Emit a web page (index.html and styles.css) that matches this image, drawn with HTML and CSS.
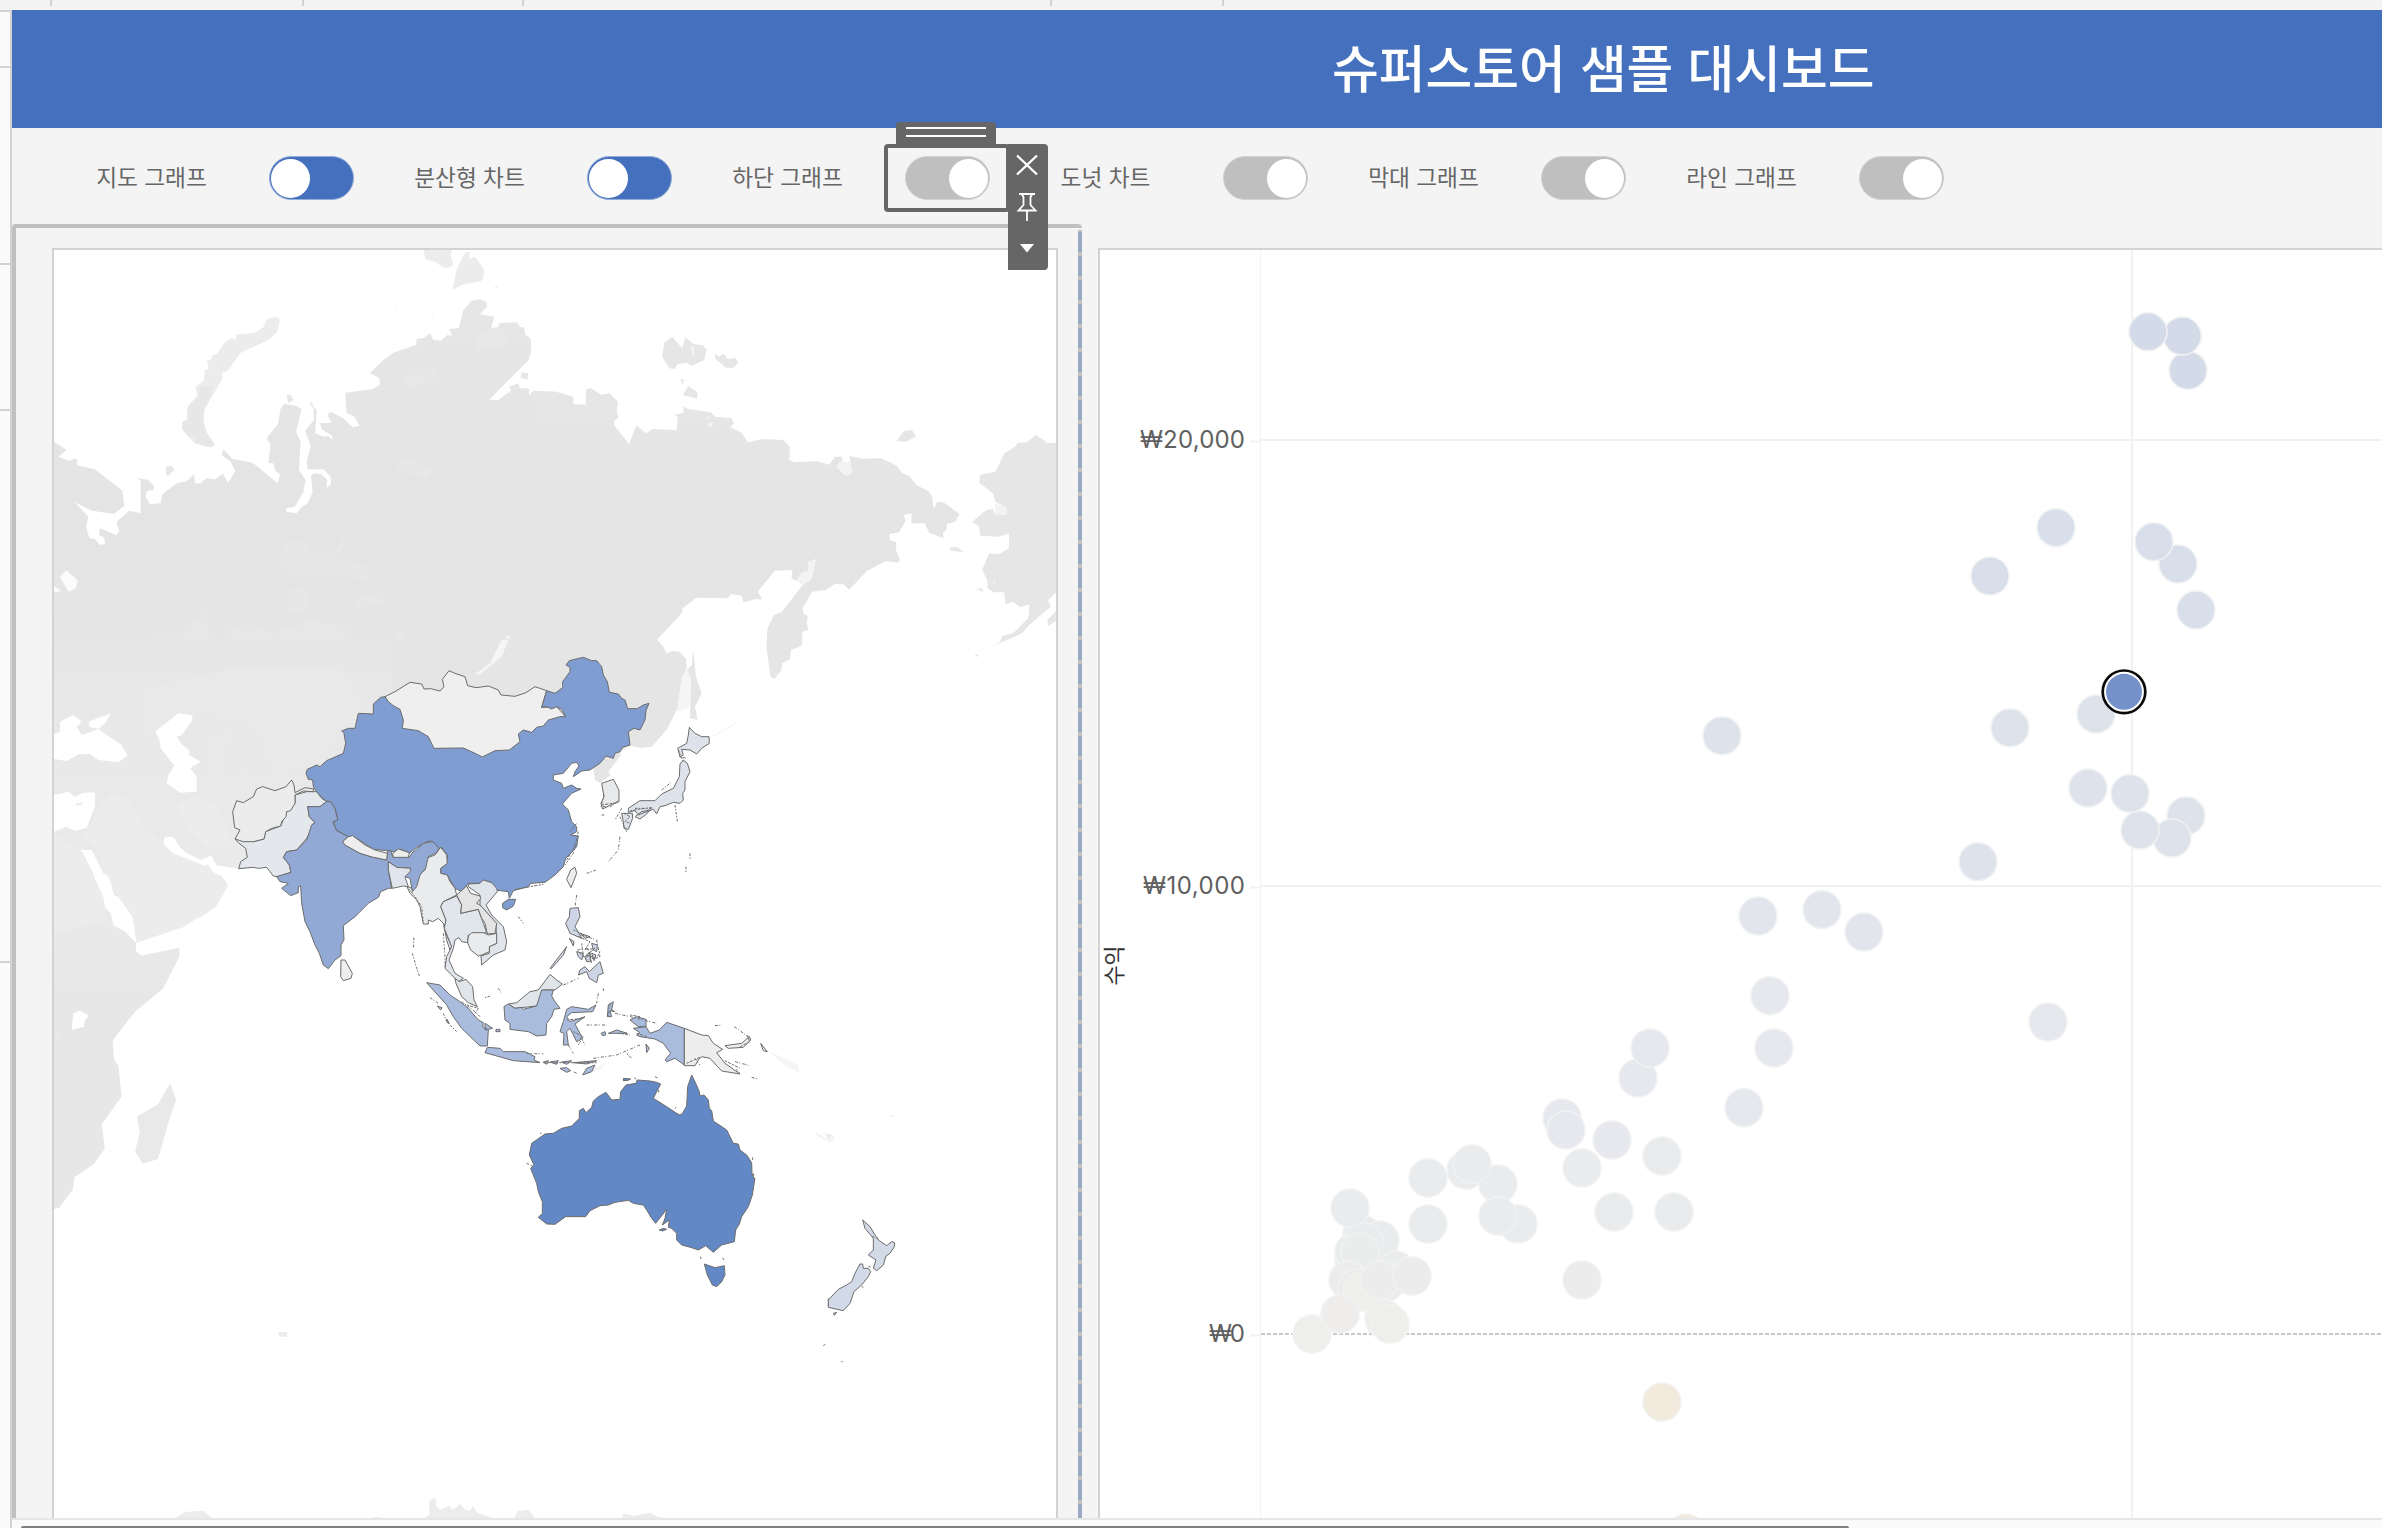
FILE: index.html
```html
<!DOCTYPE html>
<html lang="ko">
<head>
<meta charset="utf-8">
<title>슈퍼스토어 샘플 대시보드</title>
<link rel="stylesheet" href="styles.css">
</head>
<body>
<svg class="ruler-top" viewBox="0 0 2382 10"><path d="M51 0V6M303 0V6M523 0V6M1051 0V6M1223 0V6"/></svg>
<div class="workspace">
  <svg class="ruler-left" viewBox="0 10 12 1518"><path d="M0 11H11M0 67H11M0 264H11M0 410H11M0 962H11M11 10V1528"/></svg>
  <main class="dashboard">
    <header class="title-bar"><h1>슈퍼스토어 샘플 대시보드</h1></header>
    <section class="controls">
      <div class="control"><span class="label">지도 그래프</span><span class="toggle on"><i></i></span></div>
      <div class="control"><span class="label">분산형 차트</span><span class="toggle on"><i></i></span></div>
      <div class="control"><span class="label">하단 그래프</span><span class="toggle"><i></i>
        <span class="selection">
          <span class="grip"></span>
          <svg class="tools" viewBox="1008 144 40 126">
            <path d="M1008 144H1044a4 4 0 0 1 4 4V266a4 4 0 0 1-4 4H1008Z" fill="#666"/>
            <path d="M1017 155.500L1037 174.500M1037 155.500L1017 174.500" stroke="#fff" stroke-width="2.400" fill="none"/>
            <path d="M1019 194H1035M1022 194.500L1023.500 197V205L1018.500 210.500H1035.500L1030.500 205V197L1032 194.500M1027 210V221" stroke="#fff" stroke-width="1.800" fill="none"/>
            <path d="M1020 244H1034L1027 252.500Z" fill="#fff"/>
          </svg>
        </span></span></div>
      <div class="control"><span class="label">도넛 차트</span><span class="toggle"><i></i></span></div>
      <div class="control"><span class="label">막대 그래프</span><span class="toggle"><i></i></span></div>
      <div class="control"><span class="label">라인 그래프</span><span class="toggle"><i></i></span></div>
    </section>
    <section class="sheets">
      <div class="container">
        <div class="sheet map">
<svg viewBox="54 250 1002 1268">
<defs>
<linearGradient id="south" x1="0" y1="0" x2="0" y2="1"><stop offset="0" stop-color="#e6e6e6"/><stop offset=".15" stop-color="#e8e8e8"/><stop offset=".6" stop-color="#eaeaea"/><stop offset="1" stop-color="#e6e6e6"/></linearGradient>
<linearGradient id="north" x1="0" y1="0" x2="0" y2="1"><stop offset="0" stop-color="#e6e6e6"/><stop offset=".6" stop-color="#e4e4e4"/><stop offset="1" stop-color="#e6e6e6"/></linearGradient>
</defs>
<!-- north-west Russia -->
<g transform="translate(40 240) scale(.33333)">
<path fill="url(#north)" d="M42 605L80 630 55 650 90 662 105 655 113 662 110 676 165 688 247 752 253 797 222 822 155 812 105 787 145 830 138 860 148 893 165 897 180 915 195 912 193 893 177 885 180 865 230 886 237 873 230 845 268 812 302 820 302 722 292 714 325 720 342 738 340 750 322 752 316 768 330 793 362 790 367 763 413 728 440 724 462 703 465 730 482 730 500 714 525 718 548 702 565 728 586 693 572 665 545 645 550 628 578 657 638 668 713 730 720 705 705 690 700 670 685 668 692 612 681 600 683 590 714 552 722 505 732 492 768 497 785 508 768 575 782 605 777 690 797 720 790 757 764 800 737 805 740 815 770 820 785 800 803 790 818 757 813 708 822 700 845 703 862 720 860 743 873 732 872 710 850 688 803 688 800 665 812 618 795 572 822 540 820 500 830 510 826 580 850 590 865 588 878 600 876 587 845 568 840 550 875 548 862 525 872 515 910 535 938 562 958 557 942 528 920 520 916 458 1000 447 1020 433 1018 415 990 400 1030 360 1060 338 1128 315 1130 297 1152 293 1170 280 1180 300 1202 302 1222 285 1237 287 1227 267 1256 265 1270 210 1295 182 1320 177 1340 187 1340 202 1320 222 1363 230 1354 263 1373 263 1380 249 1430 247 1440 260 1453 263 1455 283 1473 298 1473 335 1466 360 1348 479 1375 480 1415 450 1407 440 1435 430 1440 445 1466 445 1468 466 1475 457 1555 457 1600 470V1340H42Z"/>
<path fill="#ececec" d="M680 238L708 230 720 240 712 275 690 297 600 340 565 390 545 400 548 415 493 510 490 540 500 578 525 615 510 622 465 610 445 590 427 568 427 545 442 540 443 500 473 467 466 442 491 422 495 390 507 388 500 362 515 358 517 346 530 343 555 306 575 295 588 298 590 283 643 278 670 262ZM1150 30H1236L1232 45 1240 75 1232 82 1210 83 1185 65 1157 58ZM1275 38L1290 36 1288 58 1300 50 1308 53 1331 88V112L1324 123 1268 134 1237 150 1250 88ZM1170 226L1180 222 1178 228ZM1366 139h5v5h-5ZM1065 207h4v3h-4Z"/>
<path fill="#e7e7e7" d="M442 540L443 500 473 467 480 440 520 440 493 510 490 540 500 578 525 615 510 622 465 610 466 592 445 590 427 568 427 545ZM378 680L395 677 403 690 385 707 378 705ZM740 465L752 464 760 480 745 490ZM1445 397L1465 400 1462 420 1442 413ZM808 487L816 487 822 503 815 500Z"/>
<path fill="#f3f3f3" d="M1400 1187L1410 1187 1403 1233 1390 1255 1345 1295 1330 1305 1308 1303 1330 1295 1378 1243Z"/>
<path fill="#fbfbfb" d="M78 990L113 1020 108 1045 85 1055 60 1010ZM42 1038L63 1053 42 1058Z"/>
<g fill="#e8e8e8" opacity=".7">
<path d="M735 905L800 905 805 930 880 940 915 890 905 935 870 965 900 955 985 980 985 1020 900 1010 830 1010 760 1010 715 970ZM560 1170L620 1150 700 1180 820 1140 920 1160 960 1230 1000 1290 960 1330 880 1300 740 1280 640 1290 540 1310 530 1280ZM150 1240L230 1215 300 1240 350 1180 420 1180 500 1110 520 1260 480 1330 80 1330 100 1280ZM1310 290L1370 260 1410 290 1380 330 1310 330ZM1090 420L1150 385 1190 390 1180 425 1100 445ZM740 1050L800 1040 805 1110 750 1115ZM940 1080L1035 1050 1035 1085 950 1110ZM1060 1180L1090 1180 1120 1240 1090 1260ZM1075 670L1100 655 1175 690 1165 715 1070 690Z"/>
</g>
</g>
<!-- eastern Russia and Alaska -->
<g transform="translate(540 240) scale(.35714 .33333)">
<path fill="url(#north)" d="M-20 452L48 455 50 485 85 492 128 494 129 448 142 445 172 464 195 460 218 485 215 515 220 535 208 540V556L249 612 270 556 298 580 315 567 383 570 386 530 376 525 402 518V498L415 507 478 517 490 530 536 535 543 550 532 562 565 578 582 607 625 597 682 600 700 622 698 660 712 667 775 664 810 674 825 650 845 650 848 665 830 680 857 708 873 697 866 648 905 656 955 655 997 676 1015 700 1033 707 1055 736 1087 753 1097 768 1103 808 1112 786 1130 787 1175 822 1163 845 1140 852 1138 870 1128 880 1130 895 1090 878 1077 850 1040 850V820L1018 825 1024 843 1005 877 978 883 980 900 997 907V930L1008 960 1003 968 968 963 915 993 866 1049 850 1033 825 1032 800 1050 762 1055 735 1105 738 1122 750 1127 747 1150 752 1170 735 1175 733 1217 703 1230 700 1258 678 1270 676 1290 657 1317 645 1310 634 1220 637 1165 655 1125 678 1115 735 1035 760 1018 773 958 752 965V993L735 997 717 1022 704 1015 707 990 657 992 610 1055 622 1078 600 1078 570 1088 565 1067 535 1062 525 1075 437 1073 400 1105 397 1120 314 1215 335 1225 350 1250 370 1233 390 1235 410 1258 405 1290 412 1320 400 1340H-20Z"/>
<path fill="#e6e6e6" d="M1450 608L1420 610 1410 600 1388 585 1363 607 1338 608 1330 620 1300 640 1275 695 1232 705 1230 728 1268 760 1275 785 1305 803 1308 825 1275 825 1268 808 1250 810 1210 845 1230 860 1232 887 1285 890 1313 880V925L1285 943 1258 940 1238 990 1252 1020 1253 1045 1270 1057 1300 1057 1303 1093 1325 1085 1345 1102 1370 1093 1368 1133 1325 1180 1295 1187 1288 1205 1260 1222 1350 1180 1370 1155 1430 1100 1423 1080 1450 1052ZM370 290L398 325 407 292 430 312 455 316 467 328 460 360 425 377 412 368 385 373 378 387 362 385 342 350 348 308ZM490 340L500 350 515 342 525 357 548 355 555 368 542 383 520 383 490 355ZM415 438L440 455V476L400 465ZM393 418h10l-3 17ZM1020 572L1042 570 1053 590 1025 605 998 603ZM1148 922L1170 922 1187 937 1150 932ZM1420 1140L1448 1110V1140L1423 1158ZM1220 1047L1238 1045 1240 1055ZM1217 1245l12-2-6 8Z"/>
<path fill="#f3f3f3" d="M421 322L432 319 432 360ZM462 535L475 525 475 535ZM468 552L487 545 478 563ZM773 958L760 1018 735 1035 717 1022 735 997 752 993V965ZM838 665L870 665 873 697 857 708 830 680ZM1268 1020l8 8-6 6ZM1275 790L1305 803 1308 825 1275 825Z"/>
</g>
<!-- western Asia and north-east Africa -->
<g transform="translate(40 640) scale(.33333)">
<path fill="url(#south)" d="M42 -2H1200V500H700L650 680 598 686 530 676 513 647 482 660 440 640 420 622 400 592 375 590 370 610 400 650 405 675 415 668 428 680 432 705 465 707 503 672 517 697 545 708 564 735 545 770 530 778V797L485 830 450 837 432 860 290 908 278 830 235 770 222 765 208 710 190 700 155 630H122L160 700 162 730 185 760 187 795 212 820 220 855 255 875 288 908V932L303 947 418 923V950L370 1045 285 1115 215 1205H42V575L78 560 108 573 140 563 165 500V457L130 458 105 470 85 455 42 465Z"/>
<path fill="#ececec" d="M180 500L215 465 260 470 310 560 400 640 503 680 564 735 530 797 432 860 290 905 278 830 222 750 170 630 130 590ZM42 580L130 640 190 770 200 840 42 880ZM410 490L480 470 530 500 560 560 580 620 500 620 440 560Z"/>
<path fill="#e9e9e9" d="M520 290L560 250 590 260 585 300 550 320 550 400 520 400 495 310ZM600 380L630 360 620 410 595 410ZM300 150L560 90 900 90 980 180 880 330 700 400 640 260 480 220 300 300Z"/>
<path fill="#fff" d="M415 220L455 225 458 240 425 285 410 290 427 315 447 330V345L482 365 450 385 470 410V455L420 458 380 430 385 405 403 377 362 325 358 297 345 275ZM42 283L60 275V245L100 225 125 245 110 260 125 285 175 268 245 315 262 347 235 367 175 360 150 342 115 343 80 363 42 357ZM145 245L213 220 195 250 175 267 150 262ZM100 1120L120 1112 148 1127 135 1140 132 1160 95 1170Z"/>
<path fill="#eee" d="M108 490L130 486 125 495 108 498ZM50 1180l5 0v20h-5Z"/>
</g>
<g transform="scale(1.5191)"><path fill="#e7e7e7" d="M35 683H74L75 697 78 702 80 722 72 733 67 740 69 756 62 766 49 775 48 783 39 795 35 796Z"/><path fill="#e9e9e9" d="M112 713L116 724 112 735 104 763 94 766 89 758 92 745 90 735 104 727Z"/><path fill="#ececec" d="M183 877h6v3h-5ZM543 746l5 1-3 3Z"/></g>
<g transform="translate(400 640) scale(.33333)">
<path fill="#e5e5e5" d="M-20 -2H770L790 20 800 40 815 35 845 45 858 60 860 85 845 110 840 190 800 270 755 320 725 323 690 318 665 330 660 350 625 395 632 405 600 430 585 420 580 385 500 250 400 200H-20ZM880 30L888 110 905 160 885 200 893 240 870 235 872 120 860 90 875 75Z"/>
<path fill="#f5f5f5" d="M325 0L305 50 240 104 225 102 270 70 305 0ZM860 85L872 115 868 205 830 215 845 110ZM935 290L1010 245 1008 250 940 292ZM1100 1230L1195 1275 1200 1300 1160 1280ZM560 1300L620 1265 600 1290Z"/>
<g class="country">
<path fill="#efefef" d="M-45 170L-15 155 30 127 65 132 72 147 92 146 120 153 132 140 127 118 147 92 165 100 195 110 203 137 228 143 265 138 295 150 303 165 345 169 378 158 405 140 440 152 425 202 470 200 497 230 500 300 247 400 0 300Z"/>
<path fill="#7f9dd0" d="M-45 170L-35 185-20 197 0 208 10 240 7 265 55 272 85 290 102 325 190 324 225 340 247 351 285 332 328 330 360 305 355 282 370 270 395 277 410 262 430 258 445 240 480 230 497 230 485 208 470 200 455 207 440 200 425 202 440 152 465 160 488 143V125L510 95V82L498 75 508 62 550 52 575 62 590 62 605 80 610 105 622 125 628 157 655 162 665 175 675 180 683 206 712 206 730 195 747 190 738 212 735 240 720 270 702 265 685 275 690 315 668 322 660 335 645 340 640 355 618 348 600 370 570 390 545 393 520 410 525 395 537 378 530 367 515 370 490 400 460 405V420L485 430 490 445 515 435 530 445 543 447 515 460 487 492 505 510 515 545 530 560V575L512 585 535 588 530 620 512 640 497 655 490 680 465 705 435 727 392 730 385 740 340 752 328 775 325 755 285 750 275 728 250 720 240 730 205 730 185 755 165 745 150 720 142 705 122 700V685L140 670 142 645 125 622 110 628 95 603 80 605 50 622 28 640 5 628-20 635-40 632-80 628-130 595-155 590-190 572-200 548-187 540-195 505-208 485-222 483-245 462-260 440-262 420-275 418-282 400-278 388-250 375-240 380-220 362-170 340-163 310-168 280-175 273-155 265-135 265-125 220-80 222V192L-58 172ZM308 790L325 778 347 778 340 798 320 810 308 803Z"/>
<path fill="#e9ebed" d="M122 622L140 645 142 670 122 685V700L142 705 150 725 165 745 170 765 130 785 122 800 138 840 133 865 142 890 155 920 150 930 140 900 130 850 115 835 98 845 85 840 85 852 70 852 60 800 50 780 30 760 20 738 35 745 50 705 75 690 78 655 105 645Z"/>
<path fill="#e1e6ec" d="M130 785L170 768 185 795 182 820 235 808 250 850 260 878 205 885 203 908 185 905 177 893 165 900 160 925 147 960 165 1000 190 1015 175 1025 155 1005 135 985 140 950 155 920 133 865 138 840 122 800Z"/>
<path fill="#e0e5ec" d="M205 732L240 730 250 720 275 728 290 745 292 755 258 795 275 825 310 860 320 905 315 930 280 945 245 975 243 948 268 940V920L290 910 288 850 240 795 240 765 205 740Z"/>
<path fill="#e4e4e4" d="M170 765L200 738 212 760 240 768 242 775 230 790 240 795 290 850 285 880 262 882 255 850 245 835 235 808 182 820 185 795Z"/>
<path fill="#e9ebed" d="M203 908L205 888 215 878 250 878 265 885 290 880V910L268 920 268 935 245 945 235 948 212 930Z"/>
<path fill="#e0e5ea" d="M165 1015L178 1025 198 1018 218 1040 222 1080 232 1100 205 1088 185 1070 168 1030ZM325 1092L345 1105 410 1098 430 1050 465 1050 487 1032 470 1020 450 1003 415 1050 390 1055 350 1088Z"/>
<path fill="#ededed" d="M525 682L530 700 513 743 500 718 512 690Z"/>
<path fill="#e7e9eb" d="M605 430L640 418 657 450V485L632 495 608 507 603 490 612 470Z"/>
<path fill="#dde2eb" d="M850 360L862 370 870 395 855 425 855 450 848 460 850 480 840 490 820 487 795 497 780 500 770 522 760 508 740 515 715 525 705 512 685 517V505L720 482 765 482 785 462 820 445 838 410 840 372ZM868 262L885 280 905 290 927 290 928 310 905 325 890 342 870 330 845 328 850 345 840 350 833 325 860 310 865 285ZM705 530L725 515 750 510 740 522 720 537ZM665 520L697 520 698 535 693 548 685 568 672 565 670 545Z"/>
<path fill="#cdd5e6" d="M510 805L535 803 540 830 525 860 540 885 545 895 510 880 497 850 508 830ZM540 990L555 980 568 995 600 965 610 1000 595 1005 590 1028 568 1015 560 995 535 1005ZM450 985L500 920 490 945 455 985ZM530 935L550 940 545 960 535 950ZM575 910L592 915 590 935 580 930ZM555 950L570 935 572 965 560 965ZM508 895L522 905 520 918ZM540 880L570 890 555 895ZM575 940L588 945 582 962Z"/>
<path fill="#a9bcde" d="M312 1100L325 1092 345 1105 365 1102 370 1108 410 1098 425 1050 460 1050 455 1068 465 1085 480 1105 462 1108 455 1130 440 1150 438 1185 410 1188 385 1175 330 1168 330 1150 315 1140ZM80 1028L120 1035 150 1065 180 1085 205 1105 235 1140 250 1148 248 1160 265 1170 262 1218 240 1218 185 1165 160 1130 140 1095ZM262 1222L300 1225 310 1235 375 1235 405 1250 402 1260 420 1268 340 1262 255 1238ZM430 1266L445 1262 440 1273ZM450 1266L475 1262 470 1273ZM485 1266L515 1262 500 1273ZM520 1268L590 1262 560 1272ZM548 1305L560 1285 585 1275 575 1295ZM480 1285L500 1283 512 1292 500 1297ZM490 1145L500 1108 515 1100 565 1108 588 1095 578 1115 515 1118 500 1130 510 1145 555 1130 525 1152 545 1190 540 1200 530 1205 510 1165 500 1175 505 1215 490 1215 492 1180 480 1175ZM625 1095L640 1085 635 1110 645 1115 630 1112 635 1130 622 1130ZM625 1180L650 1170 682 1180 640 1180ZM603 1180L615 1175 617 1185 608 1187ZM690 1140L710 1130 738 1138V1160L715 1160ZM700 1165L738 1160 750 1180 778 1170 800 1147 853 1165V1275L825 1255 800 1265 795 1260 812 1240 790 1210 765 1197 720 1190 710 1185 720 1178ZM738 1212L748 1225 740 1238ZM255 1150L278 1165 255 1170ZM288 1168h12v7h-12ZM112 1098L126 1103 122 1110ZM140 1137L148 1150 142 1148Z"/>
<path fill="#ededed" d="M853 1165L905 1185 925 1187 940 1210 968 1228 950 1238 975 1270 1020 1302 965 1293 930 1255 905 1250 895 1260 885 1277 853 1277ZM975 1217L1025 1210 1048 1190 1052 1200 1030 1222 985 1225ZM1082 1210L1102 1235 1090 1232Z"/>
</g>
<g class="specks">
<path stroke-dasharray="9 4 3 7" d="M660 590L655 630 625 665M530 765L525 800M545 885L590 900 600 950 560 960 530 930 565 925 575 970M490 1035L535 1015M505 1215L520 1240M580 1255L650 1245 720 1215M595 1060L590 1090M560 1155L620 1155M645 1120L690 1130 770 1150M1003 1160L1052 1195M945 1157L968 1155M1005 1265L1050 1277M1055 1312L1075 1318M380 1240L430 1242M530 1300L520 1295M630 1090L625 1130"/>
<path stroke-dasharray="8 4 4 5" d="M90 1073L115 1090M130 1120L140 1145 170 1175M42 893L40 925M37 940L50 985 58 1008M130 880L135 950 135 985M185 1085L225 1115 240 1130M20 738L45 770 65 800 70 850M665 505L645 540M660 530L680 575M835 330L850 365M825 495L832 545M705 505L755 505M612 465L603 500 632 500 657 480M535 575L520 640 495 675M560 700L590 690M870 640v20M858 680v20M355 830L370 850M785 450L812 428M605 525h12M610 1045v12M295 1045l8 12M270 1068L250 1075M655 1180L690 1185M545 1195l10 20M885 1255L900 1275M1008 1288L1020 1300"/>
<path stroke-dasharray="7 3 10 4" d="M535 890L570 905 555 930 585 925 560 945 590 955 600 935M545 910L550 950 580 950M520 870L545 880M690 513L720 507 755 503 750 513M672 520L690 530 675 545 690 550M838 350L860 355M200 1095L235 1105 225 1120M520 1175L550 1190 535 1215M500 1140L550 1135M690 1125L720 1130M1040 1185L1050 1205 1020 1220M430 1268H590M345 748L430 733M500 660L530 610M605 495L650 488M975 1262L1020 1285M860 1270L900 1252M510 575L530 550M680 1240L695 1255M710 1180L740 1190"/>
</g>
</g>
<g transform="translate(40 640) scale(.33333)" class="country">
<path fill="#e4e8ec" d="M585 597L640 605 672 597 677 575 722 558 740 515 765 490V465L800 455 830 455 845 475 860 485 840 500 803 500 808 530 825 548 815 555V570L800 595 770 630 740 635 730 652 748 675 753 697 712 710 700 708 680 682 655 685 640 682 596 686 602 665 622 652 617 625 597 610Z"/>
<path fill="#ececed" d="M590 482L610 488 640 470 650 447 668 440 705 452 738 440 755 420 762 435 765 458 795 443 822 447 818 455 790 453 765 465 765 490 752 512 740 515 738 530 725 545 722 558 695 565 677 575 672 597 640 605 610 605 585 597 600 570 584 563 578 515Z"/>
<path fill="#93a9d5" d="M803 500L840 500 860 485 872 485 885 505 893 540 878 545 890 572 925 590 908 605 915 615 960 640 1000 652 1040 660 1043 632 1052 632 1058 650 1108 652 1115 640 1150 610 1180 605 1197 625 1190 638 1165 650 1157 685 1140 705 1130 740 1117 755 1110 715 1095 710 1112 685 1070 682 1045 665 1045 690 1055 745 1045 745 1022 755 1015 772 985 790 945 830 910 857 912 900 903 915V947L885 960 865 986 850 975 838 940 825 915 810 875 795 845 785 790 782 738 775 740V758L752 767 725 745 745 730 720 725 710 710 753 697 748 675 730 652 740 635 770 630 800 600 815 555 825 548 808 530Z"/>
<path fill="#eee" d="M925 590L938 587 975 615 1005 630 1042 640 1040 660 1000 652 960 640 915 615 908 605ZM1058 640L1075 627 1108 638 1105 652 1060 652ZM903 960L915 960 937 1000 933 1015 910 1022 902 1010Z"/>
<path fill="#e0e5ed" d="M1045 665L1070 682 1112 685 1110 695 1095 710 1105 740 1090 738 1057 745 1045 690Z"/>
</g>
<!-- Australia and New Zealand -->
<g transform="translate(500 1020) scale(.33333)">
<g class="country">
<path fill="#6388c6" d="M575 165L585 185 598 215 600 228 612 225 625 240 628 265 635 272 640 303 680 330 700 370 715 372 720 390 740 405 755 428 756 460 764 480 757 525 745 560 725 590 718 612 707 630 703 665 665 675 640 697 617 677 595 690 575 683 545 675 530 660V640L515 625 505 622 508 600 487 615 495 595 500 568 467 610 455 595 440 570 430 555 400 550 385 541 345 547 325 555 300 557 270 572 257 590H197L165 613 140 612 115 592 127 580V545L115 515 110 490 92 445 102 435 88 405 95 370 135 342 160 340 185 325 215 318 238 295V272L250 265 258 278 275 262 280 243 295 230 318 217 335 240 360 238 362 215 378 195 408 190 412 180 450 183 470 187 482 192 470 215 460 235 500 260 530 280 540 285 548 280 560 258 563 200ZM613 732L645 743 673 737 675 765 665 785 650 800 637 795 622 765ZM478 630L490 625 500 628 488 633ZM370 175L392 177 385 181 370 182Z"/>
<path fill="#d2d9e7" d="M1088 600L1110 620 1125 645 1135 660 1160 677 1175 665 1184 668 1183 680 1170 700 1158 708 1150 735 1130 752 1120 745 1128 720 1105 705 1120 690 1120 655 1095 625ZM1080 732L1088 732 1090 745 1105 745 1112 755 1105 770 1085 795 1062 815 1050 850 1030 872 985 862V840L1015 808 1040 795 1055 785 1065 760ZM1000 880L1010 877 1003 886Z"/>
</g>
<g class="specks"><path stroke-dasharray="8 5" d="M475 210L478 222M668 713L675 725M602 710V717M80 430L100 440M758 412V425M525 265l4-3M970 978l6-6M1024 1025h4M120 340h4M403 172L412 184M1085 800l5 2M1115 650L1135 655M985 835L985 860M1105 738l8 4M465 170l10 5M660 790l8-12M480 248l4 3M760 460l5 20"/></g>
<path fill="#eee" d="M945 333L985 362 975 362 950 345ZM980 350L1003 345 1003 360 985 370ZM1165 288L1180 283 1180 293Z" opacity=".7"/>
</g>
<!-- Antarctic coast -->
<g transform="translate(0 1380) scale(.70152 .33333)"><path fill="#ececec" d="M250 414L263 396 290 392 302 414ZM530 414L535 410 548 414ZM605 414L612 404 612 365 618 353 622 358 621 378 628 390 640 377 645 390 656 372 662 387 670 393 674 377 680 398 703 414ZM733 414L738 393 753 389 763 414ZM887 414L889 401 904 407 927 398 938 412 950 414Z"/></g>
</svg>
        </div>
        <div class="splitter"></div>
      </div>
      <div class="sheet scatter">
<svg viewBox="1100 250 1282 1268">
<g class="grid"><path d="M1250 441.500H1260M1250 887.500H1260M1250 1335.500H1260M1261 440H2382M1261 886H2382M2132 250V1518"/><path class="axis" d="M1260.500 250V1518"/><path class="zero" d="M1261 1334H2382"/></g>
<g class="ticks"><text x="1245" y="448" textLength="105">₩20,000</text><text x="1245" y="894" textLength="102">₩10,000</text><text x="1245" y="1342" textLength="36">₩0</text></g>
<text class="axis-title" x="-965.500" y="1122" transform="rotate(-90)" textLength="40">수익</text>
<g class="dots">
<g fill="#d4dbe8"><circle cx="2188" cy="370.400" r="19"/><circle cx="2182.300" cy="336" r="19"/><circle cx="2148" cy="331.800" r="19"/></g>
<g fill="#d9dfea"><circle cx="2056" cy="527.700" r="19"/><circle cx="1990" cy="576" r="19"/><circle cx="2178" cy="564" r="19"/><circle cx="2154" cy="541.800" r="19"/><circle cx="2196" cy="610" r="19"/></g>
<g fill="#dee3eb"><circle cx="2096" cy="714" r="19"/><circle cx="2010" cy="727.800" r="19"/><circle cx="2088" cy="788" r="19"/><circle cx="2130" cy="793.600" r="19"/><circle cx="2186" cy="815.800" r="19"/><circle cx="2172" cy="838" r="19"/><circle cx="2140" cy="830" r="19"/><circle cx="1978" cy="861.700" r="19"/><circle cx="1722" cy="735.700" r="19"/></g>
<g fill="#e2e6ec"><circle cx="1758" cy="916" r="19"/><circle cx="1822" cy="909.700" r="19"/><circle cx="1864" cy="932" r="19"/></g>
<g fill="#e6e8ed"><circle cx="1770" cy="995.700" r="19"/><circle cx="2048" cy="1022" r="19"/><circle cx="1638" cy="1078" r="19"/><circle cx="1650" cy="1048" r="19"/><circle cx="1774" cy="1048" r="19"/><circle cx="1744" cy="1107.700" r="19"/><circle cx="1562" cy="1118" r="19"/><circle cx="1566" cy="1130" r="19"/><circle cx="1612" cy="1140" r="19"/></g>
<g fill="#e9ebed"><circle cx="1582" cy="1168" r="19"/><circle cx="1662" cy="1156" r="19"/><circle cx="1614" cy="1212" r="19"/><circle cx="1674" cy="1212" r="19"/><circle cx="1428" cy="1178" r="19"/><circle cx="1466" cy="1170" r="19"/><circle cx="1498" cy="1184" r="19"/><circle cx="1472" cy="1164" r="19"/><circle cx="1428" cy="1224" r="19"/><circle cx="1518" cy="1224" r="19"/><circle cx="1498" cy="1216" r="19"/><circle cx="1362" cy="1234" r="19"/><circle cx="1350" cy="1208" r="19"/><circle cx="1380" cy="1240" r="19"/><circle cx="1354" cy="1260" r="19"/><circle cx="1354" cy="1252" r="19"/><circle cx="1364" cy="1242" r="19"/></g>
<g fill="#ebedec"><circle cx="1396" cy="1270" r="19"/><circle cx="1360" cy="1252" r="19"/></g>
<g fill="#ececec"><circle cx="1582" cy="1280" r="19"/><circle cx="1348" cy="1280" r="19"/><circle cx="1357" cy="1288" r="19"/></g>
<g fill="#eeeeeb"><circle cx="1362" cy="1292" r="19"/></g>
<g fill="#ececec"><circle cx="1386" cy="1282" r="19"/><circle cx="1380" cy="1280" r="19"/><circle cx="1412" cy="1276" r="19"/></g>
<g fill="#eeeeea"><circle cx="1312" cy="1334" r="19"/><circle cx="1340" cy="1314" r="19" fill="#eeedeb"/><circle cx="1384" cy="1318.700" r="19"/><circle cx="1390" cy="1324" r="19"/></g>
<g fill="#f2eadd"><circle cx="1662" cy="1402" r="19"/><circle cx="1686" cy="1533" r="19"/></g>
</g>
<circle cx="2124" cy="691.800" r="21.300" fill="#fff" stroke="#0a0a0a" stroke-width="2.700"/><circle cx="2124" cy="691.800" r="18" fill="#7492c9"/>
</svg>
      </div>
    </section>
    <div class="scroll-track"><div class="scroll-thumb"></div></div>
  </main>
</div>
</body>
</html>
```
FILE: styles.css
```css
* { box-sizing: border-box; }
body {
  margin: 0;
  width: 2382px;
  height: 1528px;
  overflow: hidden;
  display: flex;
  flex-direction: column;
  background: #f4f4f4;
  font-family: "Noto Sans CJK KR", sans-serif;
}
svg { display: block; }
.ruler-top { width: 2382px; height: 10px; flex: none; }
.ruler-top path, .ruler-left path { stroke: #d2d2d2; stroke-width: 2; fill: none; }
.workspace { display: flex; flex: 1; min-height: 0; }
.ruler-left { width: 12px; height: 1518px; flex: none; background: #fafafa; }
.dashboard { flex: 1; min-width: 0; display: flex; flex-direction: column; }

.title-bar {
  height: 118px;
  flex: none;
  background: #4570be;
  padding: 0 0 6px 1320px;
  display: flex;
  align-items: center;
}
.title-bar h1 {
  margin: 0;
  font-size: 50.8px;
  line-height: 76px;
  font-weight: 500;
  color: #fff;
  white-space: nowrap;
}

.controls { height: 96px; flex: none; padding: 28px 0 0 60px; display: flex; align-items: flex-start; }
.control { width: 318px; flex: none; display: flex; align-items: center; }
.label { width: 159px; padding-bottom: 3px; text-align: center; color: #666; font-size: 22.7px; line-height: 41px; white-space: nowrap; }
.toggle {
  position: relative;
  width: 85px;
  height: 44px;
  margin-left: 37.5px;
  border-radius: 22px;
  border: 1px solid #d2d2d2;
  background: #bfbfbf;
  padding: 1.5px 1px;
  display: flex;
  justify-content: flex-end;
}
.toggle.on { background: #4570be; border-color: #93add9; justify-content: flex-start; }
.toggle i { width: 39px; height: 39px; border-radius: 50%; background: #fff; }

.selection {
  position: absolute;
  left: -21.5px;
  top: -13px;
  width: 126px;
  height: 68px;
  border: 4px solid #666;
  border-radius: 4px;
  z-index: 2;
}
.grip {
  position: absolute;
  left: 8px;
  top: -26px;
  width: 100px;
  height: 24px;
  border-radius: 4px 4px 0 0;
  border: solid #666;
  border-width: 5px 10px 7px;
  background: linear-gradient(#fff 2px, #666 2px, #666 8px, #fff 8px, #fff 10px, #666 10px);
}
.tools { position: absolute; left: 120px; top: -4px; width: 40px; height: 126px; }

.sheets { flex: 1; min-height: 0; display: flex; gap: 16px; }
.container {
  width: 1070px;
  flex: none;
  display: flex;
  justify-content: space-between;
  border: solid #c0c0c0;
  border-width: 4px 0 0 4px;
  border-radius: 4px 4px 0 0;
  padding: 20px 0 0 36px;
}
.sheet { background: #fff; border: 2px solid #d3d3d3; border-bottom: 0; }
.map { width: 1006px; overflow: hidden; }
.map svg { width: 1002px; height: 1268px; }
.splitter {
  width: 4px;
  margin-top: -18px;
  background: repeating-linear-gradient(#c0c0c0 0 2px, #9aa9c2 2px 22px, #c0c0c0 22px 24px);
}
.country { stroke: #6b6b6b; stroke-width: 3; stroke-linejoin: round; }
.specks { fill: none; stroke: #6f6f6f; stroke-width: 3; }

.scatter { flex: 1; margin-top: 24px; border-right: 0; }
.scatter svg { width: 1282px; height: 1268px; overflow: visible; }
.grid path { fill: none; stroke: #f1f1f1; stroke-width: 2; }
.grid .axis { stroke: #f2f2f2; stroke-width: 1; }
.grid .zero { stroke: #c8c8c8; stroke-dasharray: 4 2; }
.ticks text { font: 24px Inter, "Noto Sans CJK KR", sans-serif; fill: #606060; text-anchor: end; }
.axis-title { font-size: 22px; fill: #333; text-anchor: middle; }
.dots circle { stroke: #f1f2f3; stroke-width: 1.5; }

.scroll-track { height: 10px; flex: none; background: #fafafa; border-top: 2px solid #e6e6e6; padding: 6px 0 0 9px; }
.scroll-thumb { width: 1828px; height: 2px; background: #7f7f7f; border-radius: 2px 2px 0 0; }
```
